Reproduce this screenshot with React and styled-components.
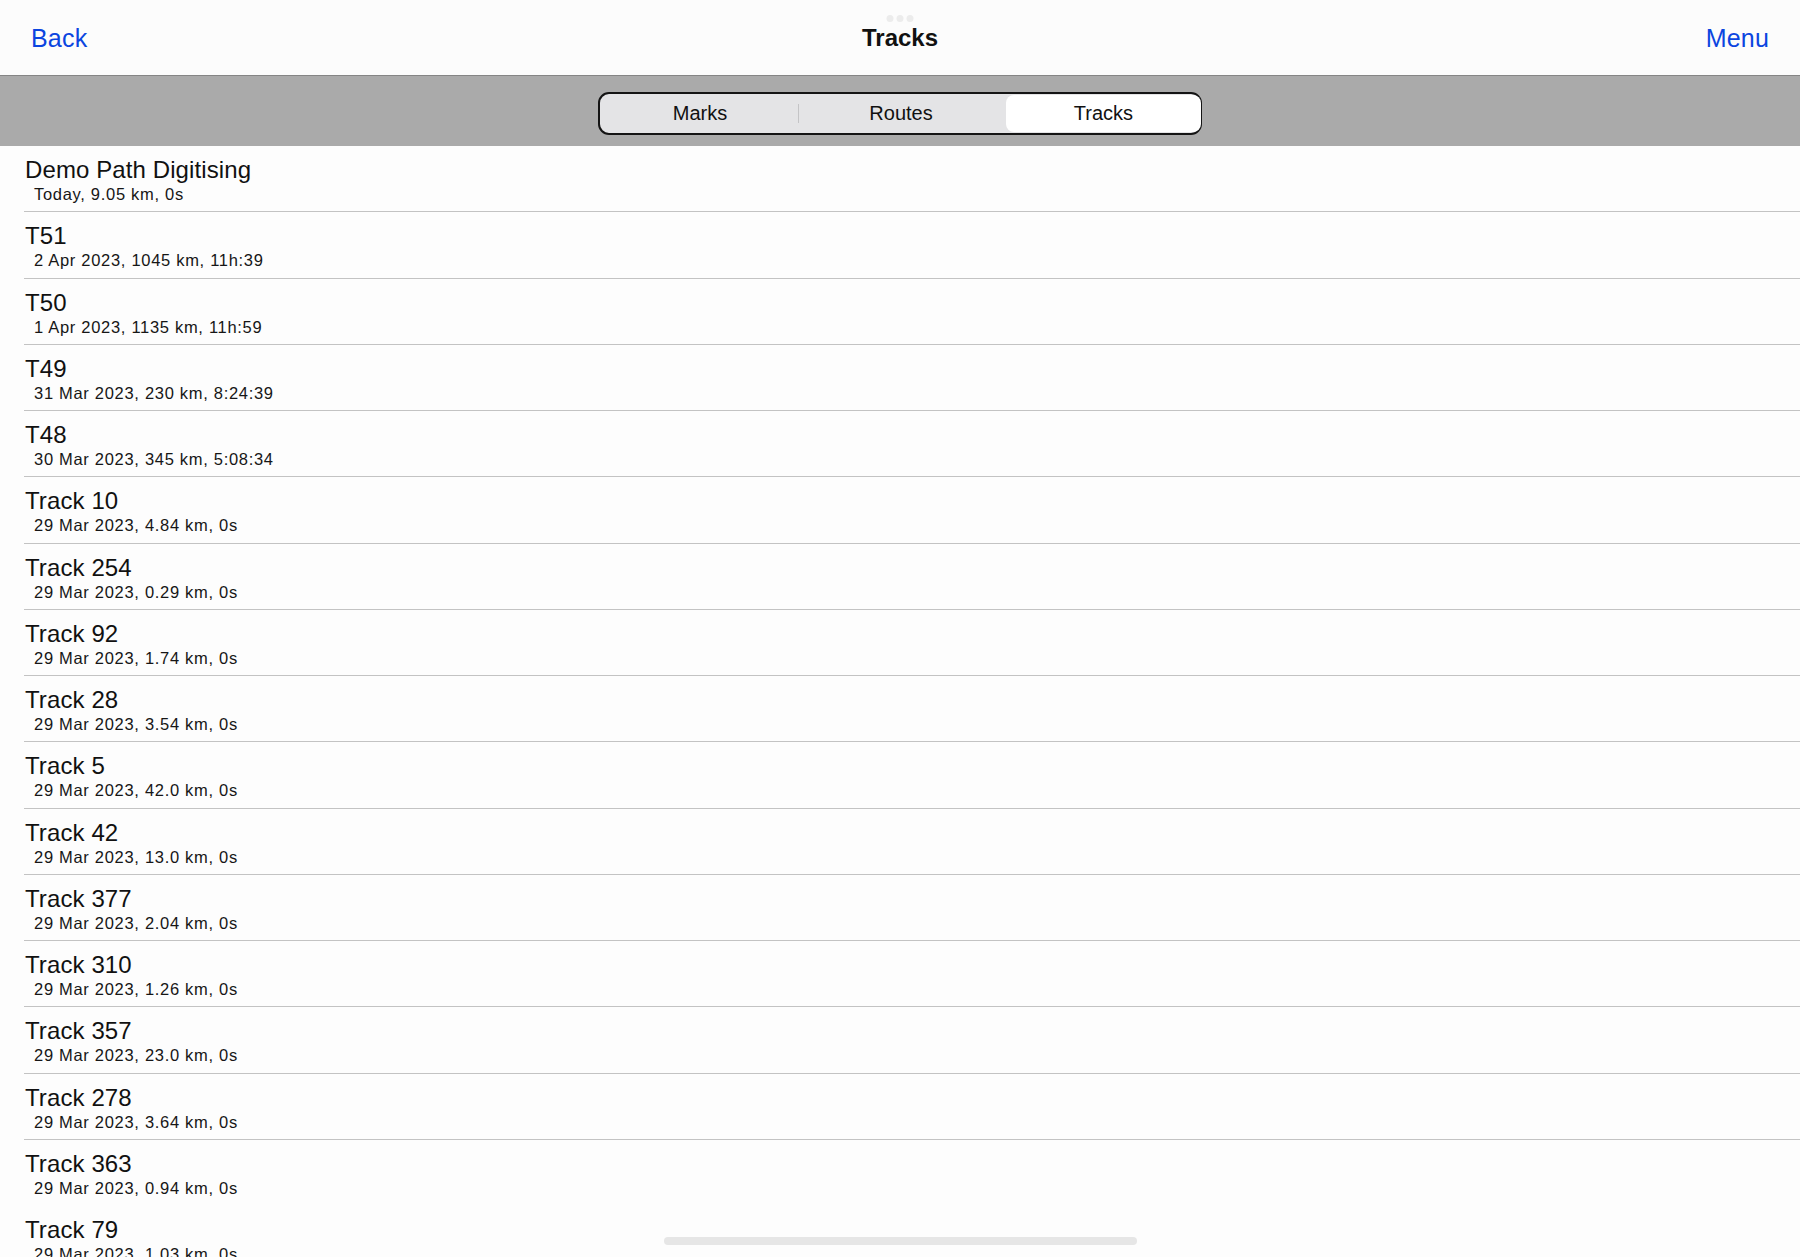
import React from "react";
import styled, { createGlobalStyle } from "styled-components";

const GlobalStyle = createGlobalStyle`
  html, body {
    margin: 0;
    padding: 0;
    background: #fdfdfd;
    font-family: "Liberation Sans", Arial, sans-serif;
    overflow: hidden;
  }
`;

const Page = styled.div`
  width: 1800px;
  height: 1257px;
  overflow: hidden;
  background: #fdfdfd;
  position: relative;
`;

const NavBar = styled.div`
  height: 75px;
  border-bottom: 1px solid #858585;
  background: #fcfcfc;
  display: flex;
  align-items: center;
  justify-content: space-between;
  padding: 0 31px;
  position: relative;
`;

const NavLink = styled.span`
  color: #0b45e0;
  font-size: 25px;
  letter-spacing: 0.2px;
  margin-top: 1px;
`;

const NavTitle = styled.span`
  position: absolute;
  left: 50%;
  transform: translateX(-50%);
  font-size: 24px;
  font-weight: 700;
  color: #111;
  margin-top: 1px;
`;

const Grabber = styled.div`
  position: absolute;
  top: 15px;
  left: 50%;
  transform: translateX(-50%);
  display: flex;
  gap: 3px;
`;

const Dot = styled.span`
  width: 7px;
  height: 7px;
  border-radius: 50%;
  background: #ececec;
`;

const Toolbar = styled.div`
  height: 70px;
  background: #aaaaaa;
  display: flex;
  justify-content: center;
  padding-top: 16px;
  box-sizing: border-box;
`;

const Segmented = styled.div`
  width: 604px;
  height: 43px;
  box-sizing: border-box;
  border: 2px solid #141414;
  border-radius: 11px;
  background: #e4e4e6;
  display: grid;
  grid-template-columns: 198px 204px 198px;
  padding: 1px;
`;

const Segment = styled.div`
  display: flex;
  align-items: center;
  justify-content: center;
  font-size: 20px;
  color: #111;
  border-radius: 8px;
  margin-left: ${(p) => (p.$active ? "3px" : "0")};
  background: ${(p) => (p.$active ? "#ffffff" : "transparent")};
  position: relative;
  &::after {
    content: "";
    display: ${(p) => (p.$divider ? "block" : "none")};
    position: absolute;
    right: 0;
    top: 9px;
    bottom: 9px;
    width: 1px;
    background: #c4c4c6;
  }
`;

const List = styled.div`
  display: flex;
  flex-direction: column;
`;

const Row = styled.div`
  height: 66.25px;
  flex-shrink: 0;
  box-sizing: border-box;
  margin-left: 24px;
  border-bottom: 1px solid ${(p) => (p.$last ? "transparent" : "#c3c3c3")};
  padding-top: 10px;
`;

const RowTitle = styled.div`
  font-size: 24px;
  line-height: 28px;
  letter-spacing: 0.1px;
  color: #111;
  margin-left: 1px;
`;

const RowSub = styled.div`
  font-size: 16.5px;
  line-height: 20px;
  letter-spacing: 0.7px;
  color: #161616;
  margin-left: 10px;
`;

const HomeBar = styled.div`
  position: absolute;
  left: 664px;
  top: 1237px;
  width: 473px;
  height: 8px;
  border-radius: 4px;
  background: #e6e6e6;
`;

const tracks = [
  ["Demo Path Digitising", "Today, 9.05 km, 0s"],
  ["T51", "2 Apr 2023, 1045 km, 11h:39"],
  ["T50", "1 Apr 2023, 1135 km, 11h:59"],
  ["T49", "31 Mar 2023, 230 km, 8:24:39"],
  ["T48", "30 Mar 2023, 345 km, 5:08:34"],
  ["Track 10", "29 Mar 2023, 4.84 km, 0s"],
  ["Track 254", "29 Mar 2023, 0.29 km, 0s"],
  ["Track 92", "29 Mar 2023, 1.74 km, 0s"],
  ["Track 28", "29 Mar 2023, 3.54 km, 0s"],
  ["Track 5", "29 Mar 2023, 42.0 km, 0s"],
  ["Track 42", "29 Mar 2023, 13.0 km, 0s"],
  ["Track 377", "29 Mar 2023, 2.04 km, 0s"],
  ["Track 310", "29 Mar 2023, 1.26 km, 0s"],
  ["Track 357", "29 Mar 2023, 23.0 km, 0s"],
  ["Track 278", "29 Mar 2023, 3.64 km, 0s"],
  ["Track 363", "29 Mar 2023, 0.94 km, 0s"],
  ["Track 79", "29 Mar 2023, 1.03 km, 0s"],
];

const App = () => {
  return (
    <Page>
      <GlobalStyle />
      <NavBar>
        <Grabber>
          <Dot />
          <Dot />
          <Dot />
        </Grabber>
        <NavLink>Back</NavLink>
        <NavTitle>Tracks</NavTitle>
        <NavLink>Menu</NavLink>
      </NavBar>
      <Toolbar>
        <Segmented>
          <Segment $divider>Marks</Segment>
          <Segment>Routes</Segment>
          <Segment $active>Tracks</Segment>
        </Segmented>
      </Toolbar>
      <List>
        {tracks.map(([name, info], i) => (
          <Row key={name} $last={i >= tracks.length - 2}>
            <RowTitle>{name}</RowTitle>
            <RowSub>{info}</RowSub>
          </Row>
        ))}
      </List>
      <HomeBar />
    </Page>
  );
};

export default App;
